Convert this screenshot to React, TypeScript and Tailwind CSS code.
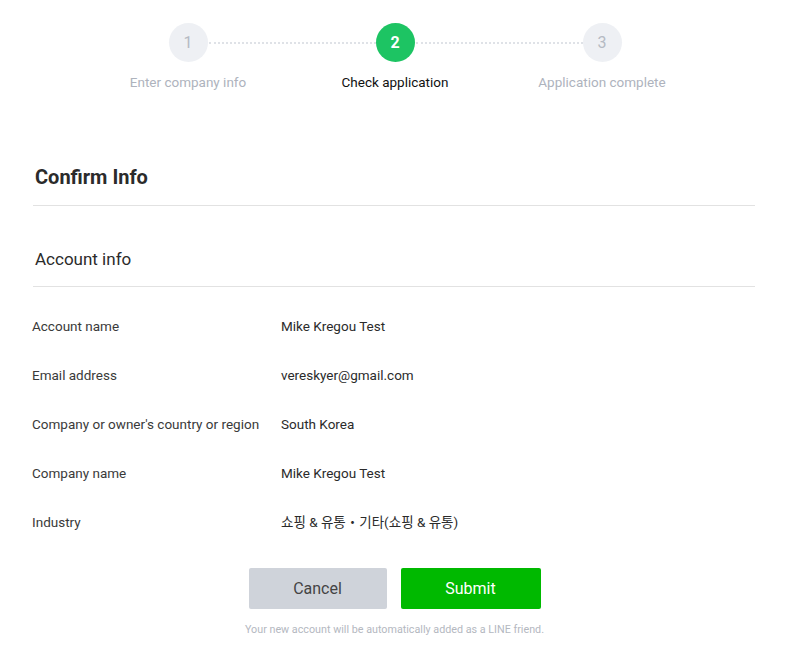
import React from 'react';

const steps = [
  { num: 1, label: 'Enter company info' },
  { num: 2, label: 'Check application' },
  { num: 3, label: 'Application complete' },
];

const rows = [
  { label: 'Account name', value: 'Mike Kregou Test' },
  { label: 'Email address', value: 'vereskyer@gmail.com' },
  { label: "Company or owner's country or region", value: 'South Korea' },
  { label: 'Company name', value: 'Mike Kregou Test' },
  { label: 'Industry', value: '쇼핑 & 유통・기타(쇼핑 & 유통)' },
];

const current = 2;

const App: React.FC = () => {
  return (
    <div className="w-[792px] h-[660px] bg-white text-[#333] font-['Roboto','Noto_Sans_CJK_KR',sans-serif]">
      {/* progress steps */}
      <div className="flex justify-center pt-[23px] pr-[2px]">
        {steps.map((step, i) => {
          const active = step.num === current;
          return (
            <div key={step.num} className="relative w-[207px] flex flex-col items-center">
              {i > 0 && (
                <div className="absolute top-[19px] right-[123px] w-[167px] border-t-2 border-dotted border-[#dfe2e7]" />
              )}
              <div
                className={
                  active
                    ? 'relative z-10 w-[39px] h-[39px] rounded-full bg-[#1dc463] text-white font-bold text-[16px] flex items-center justify-center'
                    : 'relative z-10 w-[39px] h-[39px] rounded-full bg-[#eef0f4] text-[#b5bac3] text-[16px] flex items-center justify-center'
                }
              >
                {step.num}
              </div>
              <div
                className={
                  active
                    ? 'mt-[10px] text-[13.5px] text-[#111]'
                    : 'mt-[10px] text-[13.5px] text-[#aeb3bd]'
                }
              >
                {step.label}
              </div>
            </div>
          );
        })}
      </div>

      <div className="pl-[33px] pr-[37px] mt-[71px]">
        <h2 className="pl-[2px] text-[20px] font-bold text-[#2b2b2b] leading-[28px]">Confirm Info</h2>
        <div className="mt-[14px] border-t border-[#e2e2e2]" />
        <h3 className="pl-[2px] mt-[41px] text-[17px] text-[#2b2b2b] leading-[24px]">Account info</h3>
        <div className="mt-[15px] border-t border-[#e2e2e2]" />

        <div className="mt-[30px] flex flex-col gap-[31px]">
          {rows.map((row) => (
            <div key={row.label} className="flex text-[13.5px] leading-[18px] -ml-[1px]">
              <div className="w-[249px] text-[#3a3a3a]">{row.label}</div>
              <div className="text-[#2b2b2b]">{row.value}</div>
            </div>
          ))}
        </div>
      </div>

      <div className="mt-[37px] flex justify-center gap-[14px] pr-[3px]">
        <button className="w-[138px] h-[41px] rounded-[2px] bg-[#cfd3da] text-[#444] text-[16px]">Cancel</button>
        <button className="w-[140px] h-[41px] rounded-[2px] bg-[#00b900] text-white text-[16px]">Submit</button>
      </div>
      <p className="mt-[13px] text-center text-[10.75px] text-[#b4b8bf] pr-[3px]">
        Your new account will be automatically added as a LINE friend.
      </p>
    </div>
  );
};

export default App;
